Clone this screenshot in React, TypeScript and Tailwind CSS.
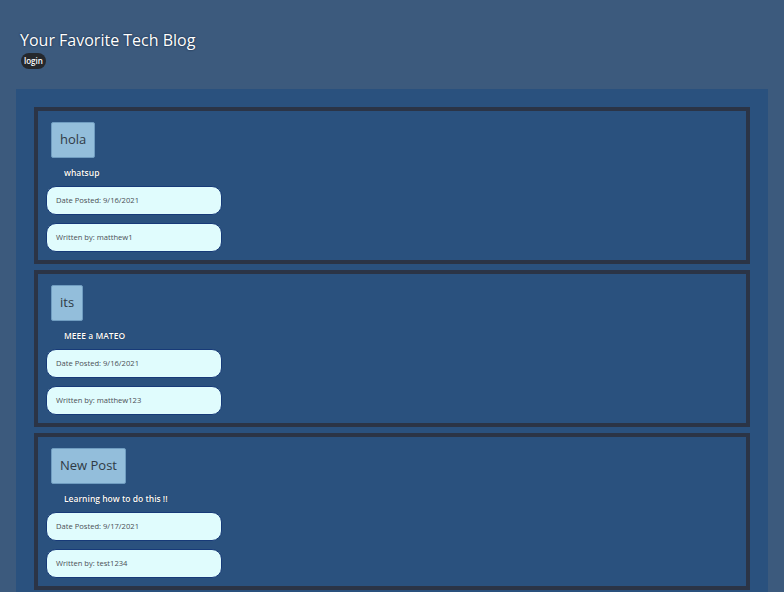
const posts = [
  { title: "hola", body: "whatsup", date: "9/16/2021", author: "matthew1" },
  { title: "its", body: "MEEE a MATEO", date: "9/16/2021", author: "matthew123" },
  { title: "New Post", body: "Learning how to do this !!", date: "9/17/2021", author: "test1234" },
]

function PostCard({ post }: { post: (typeof posts)[number] }) {
  return (
    <article className="border-4 border-[#2b3446] px-2 pt-2 pb-2">
      <h2 className="mt-[3px] ml-[5px] inline-flex h-[36px] items-center rounded-[2px] border border-[#6f9cc0] bg-[#93bedb] px-[8px] text-[13px] text-[#2f3a45]">
        {post.title}
      </h2>
      <p className="mt-[8px] ml-[18px] text-[8.5px] leading-[14px] font-semibold text-white [text-shadow:0_0_1px_#0b1b33]">
        {post.body}
      </p>
      <div className="mt-[6px] flex h-[29px] w-[176px] items-center rounded-[10px] border border-[#173a78] bg-[#e0fcfd] px-[9px] text-[7.6px] text-[#4a4f55]">
        Date Posted: {post.date}
      </div>
      <div className="mt-[8px] flex h-[29px] w-[176px] items-center rounded-[10px] border border-[#173a78] bg-[#e0fcfd] px-[9px] text-[7.6px] text-[#4a4f55]">
        Written by: {post.author}
      </div>
    </article>
  )
}

export default function App() {
  return (
    <div className="min-h-screen bg-[#3c5a7d] font-['Open_Sans',sans-serif]">
      <header className="flex flex-col items-start px-5 pt-[28px] pb-[20px]">
        <h1 className="text-[16px] leading-[24px] text-white [text-shadow:0_0_2px_#0b1b33]">
          Your Favorite Tech Blog
        </h1>
        <button className="mt-[1px] ml-px h-[16px] rounded-full bg-[#25282d] px-[3px] text-[8px] leading-[16px] font-semibold text-white">
          login
        </button>
      </header>
      <main className="mx-4 flex flex-col gap-[6px] bg-[#2a517e] px-[18px] pt-[18px] pb-4">
        {posts.map((p) => (
          <PostCard key={p.title} post={p} />
        ))}
      </main>
    </div>
  )
}
